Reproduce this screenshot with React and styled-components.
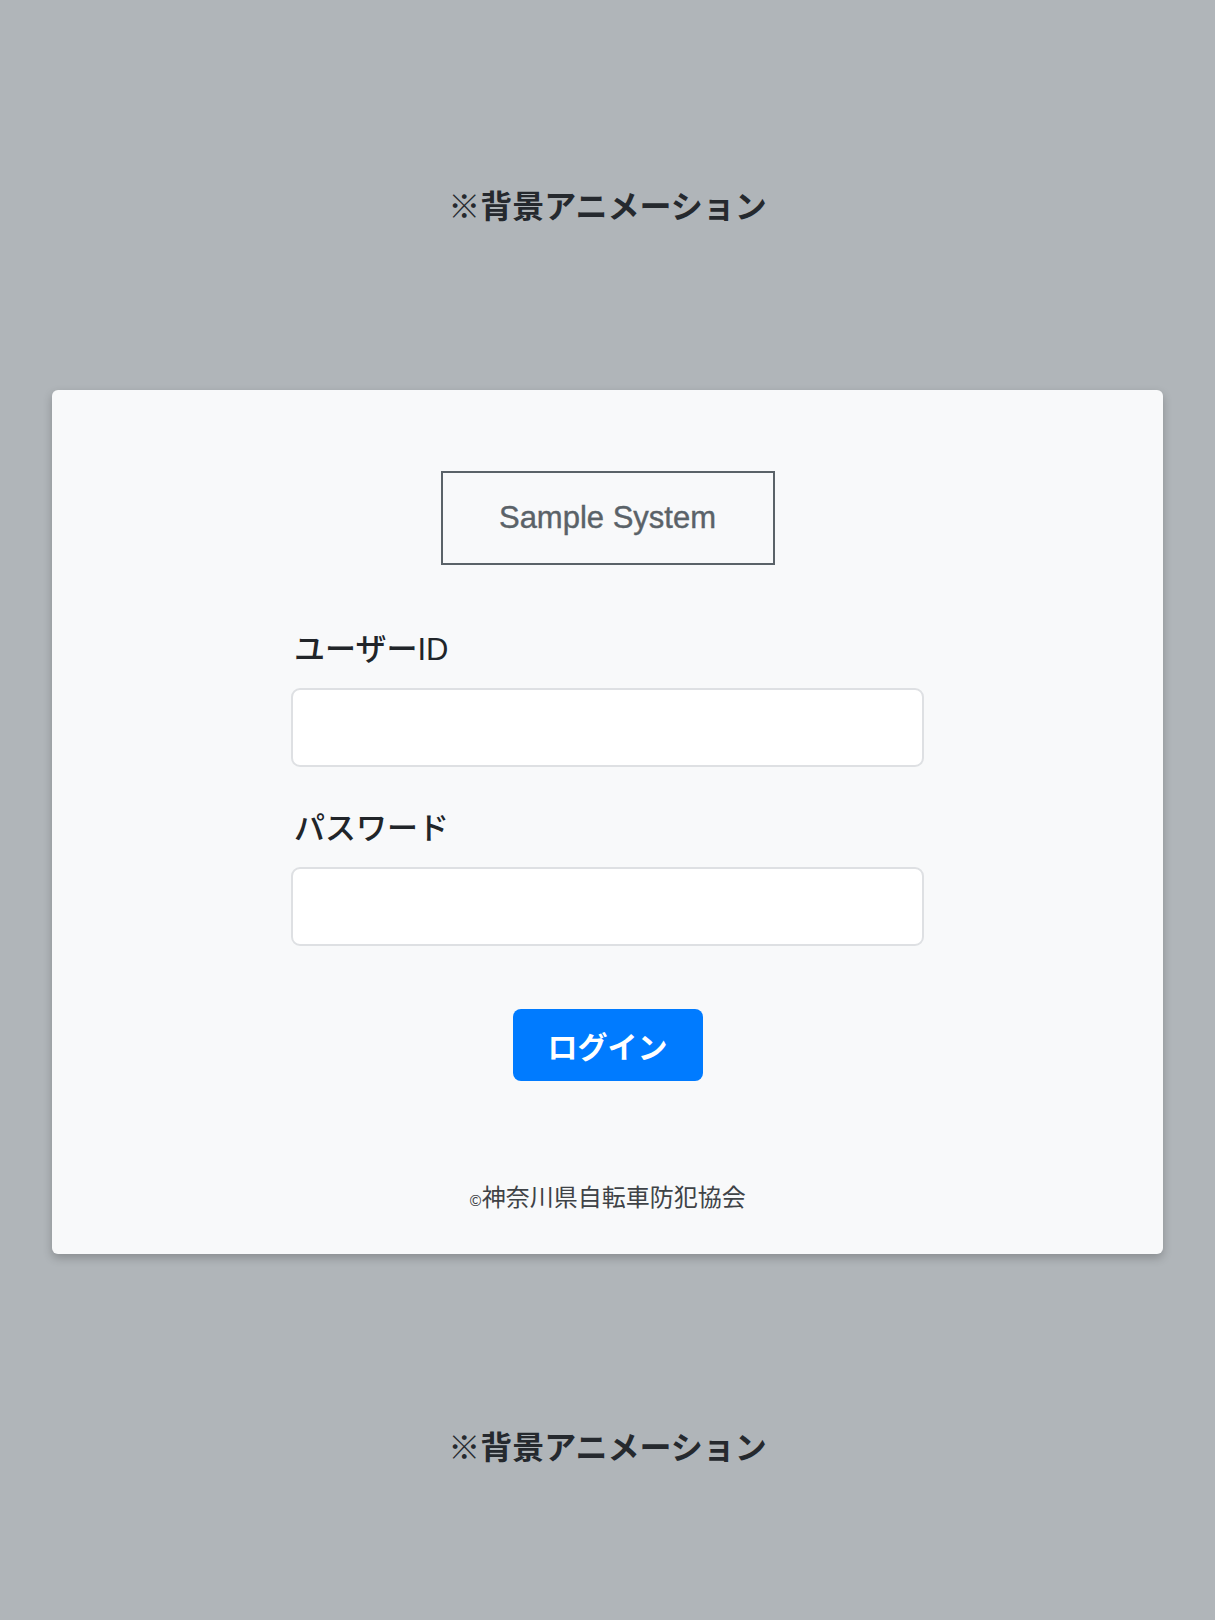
import React, { useState } from 'react';
import styled, { createGlobalStyle } from 'styled-components';

const GlobalStyle = createGlobalStyle`
  * {
    box-sizing: border-box;
  }
  body {
    margin: 0;
    background-color: #b0b5b9;
    font-family: "Liberation Sans", "Noto Sans CJK JP", sans-serif;
    color: #212529;
  }
`;

const Page = styled.div`
  display: flex;
  flex-direction: column;
  min-height: 1620px;
`;

const Banner = styled.div`
  padding: ${(p) => p.$pad};
  text-align: center;
  font-family: "Noto Sans CJK JP", sans-serif;
  font-size: 32px;
  font-weight: 700;
  line-height: 48px;
  color: #25292e;
`;

const Card = styled.div`
  margin: 0 52px;
  padding: 81px 0 36px;
  background-color: #f8f9fa;
  border-radius: 6px;
  box-shadow: 0 4px 10px rgba(0, 0, 0, 0.22);
  display: flex;
  flex-direction: column;
  align-items: center;
`;

const Logo = styled.div`
  width: 334px;
  height: 94px;
  border: 2px solid #5a6268;
  display: flex;
  align-items: center;
  justify-content: center;
  font-family: "Liberation Sans", sans-serif;
  font-size: 31px;
  color: #5a6268;
  -webkit-text-stroke: 0.4px #5a6268;
`;

const Form = styled.form`
  width: 633px;
  margin-top: 62px;
  display: flex;
  flex-direction: column;
`;

const Label = styled.label`
  padding-left: 3px;
  margin-top: ${(p) => p.$top || 0}px;
  font-size: 31px;
  font-weight: 500;
  line-height: 46px;
  color: #212529;
`;

const Input = styled.input`
  margin-top: 15px;
  height: 79px;
  width: 100%;
  border: 2px solid #dee0e3;
  border-radius: 9px;
  background-color: #fff;
  font-size: 24px;
  padding: 0 16px;
  outline: none;
`;

const Button = styled.button`
  align-self: center;
  margin-top: 63px;
  width: 190px;
  height: 72px;
  border: none;
  border-radius: 8px;
  background-color: #007bff;
  color: #fff;
  font-family: "Noto Sans CJK JP", sans-serif;
  font-size: 30px;
  font-weight: 700;
  cursor: pointer;
`;

const Footer = styled.div`
  margin-top: 97px;
  font-family: "Noto Sans CJK JP", sans-serif;
  font-size: 24px;
  line-height: 36px;
  color: #3f4347;

  small {
    font-size: 15px;
  }
`;

function App() {
  const [userId, setUserId] = useState('');
  const [password, setPassword] = useState('');

  return (
    <Page>
      <GlobalStyle />
      <Banner $pad="180px 0 162px">※背景アニメーション</Banner>
      <Card>
        <Logo>Sample System</Logo>
        <Form onSubmit={(e) => e.preventDefault()}>
          <Label htmlFor="userId">ユーザーID</Label>
          <Input id="userId" value={userId} onChange={(e) => setUserId(e.target.value)} />
          <Label htmlFor="password" $top={39}>パスワード</Label>
          <Input id="password" type="password" value={password} onChange={(e) => setPassword(e.target.value)} />
          <Button type="submit">ログイン</Button>
        </Form>
        <Footer><small>©</small>神奈川県自転車防犯協会</Footer>
      </Card>
      <Banner $pad="167px 0 155px">※背景アニメーション</Banner>
    </Page>
  );
}

export default App;
